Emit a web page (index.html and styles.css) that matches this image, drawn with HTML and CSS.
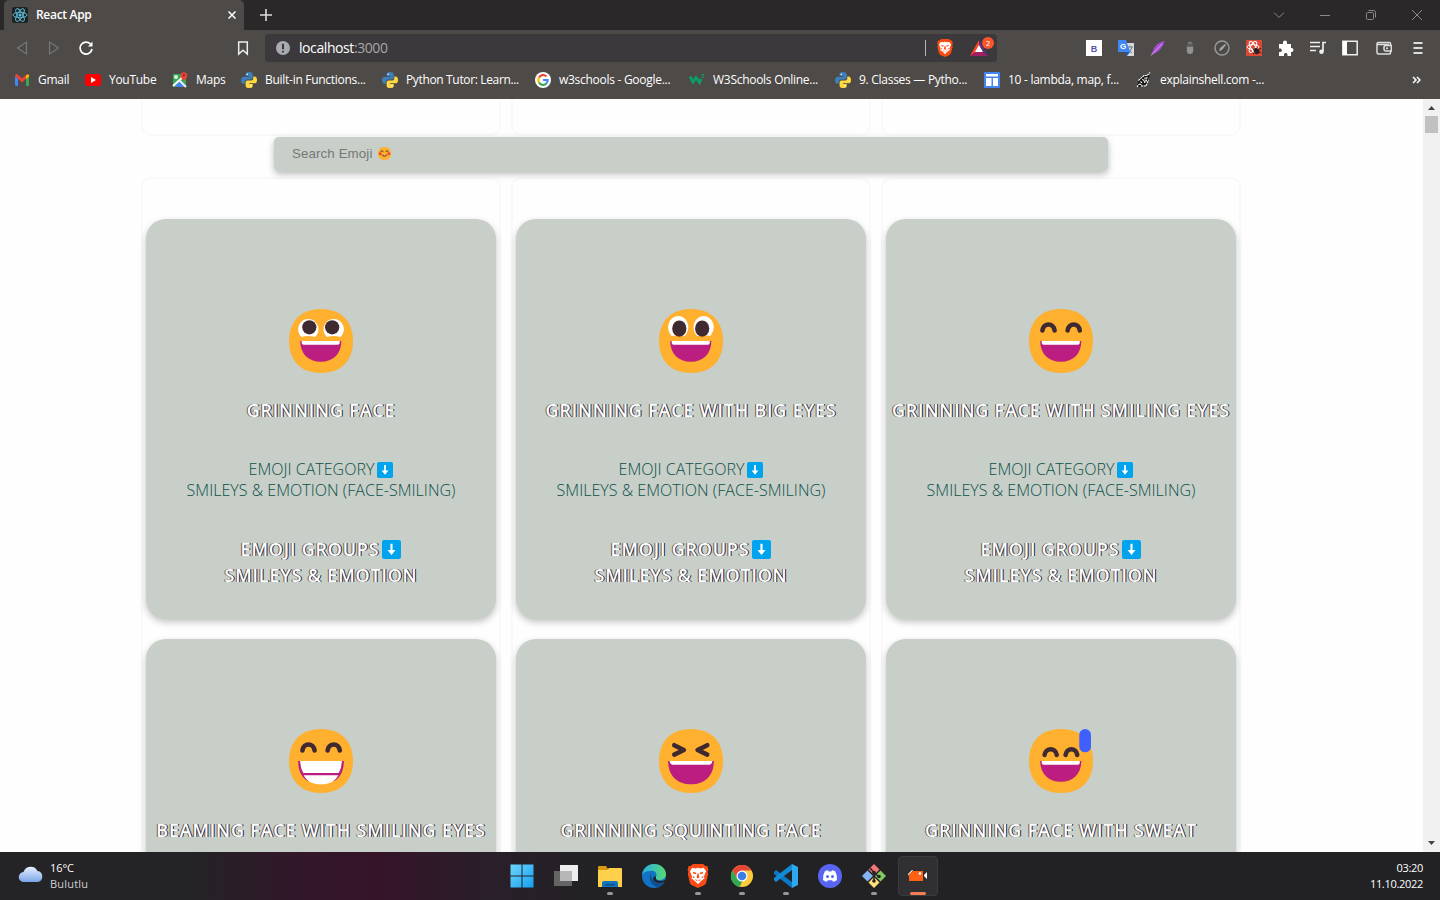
FILE: index.html
```html
<!DOCTYPE html>
<html lang="en">
<head>
<meta charset="utf-8">
<title>React App</title>
<link rel="stylesheet" href="styles.css">
</head>
<body>
<svg class="defs" aria-hidden="true">
  <symbol id="python" viewBox="0 0 16 16"><path fill="#3d7fb8" d="M8 0C5 0 4.600 1 4.600 2.300V4h3.600v.7H3C1 4.700 0 6 0 8.200s1 3.600 2.600 3.600h1.300V10c0-1.500 1.100-2.500 2.500-2.500h3.300c1.200 0 2-.9 2-2V2.300C11.700.9 10.500 0 8 0z"/><path fill="#ffd83f" d="M8.300 16c3 0 3.400-1 3.400-2.300V12H8.100v-.7h5.200c2 0 2.700-1.300 2.700-3.400 0-2.200-.9-3.500-2.500-3.500h-1.200v1.800c0 1.500-1.100 2.400-2.500 2.400H6.600c-1.200 0-2 .9-2 2v3.100c0 1.400 1.200 2.300 3.700 2.300z"/><circle cx="6.300" cy="2.200" r=".8" fill="#fff"/><circle cx="9.900" cy="13.800" r=".8" fill="#fff"/></symbol>
  <symbol id="brave" viewBox="0 0 20 23"><path fill="#fb4b14" d="M5 0h10l2 2 2-.2 1 4-.8 1.500.6 2.200-2 8.500c-.3 1-1.300 1.800-2 2.300L10 23l-5.800-2.700c-.8-.5-1.700-1.300-2-2.300l-2-8.500.6-2.200L0 5.800l1-4L3 2z"/><path fill="#fff" d="M4.500 3.700l3 .5 2.500-.6 2.500.6 3-.5L17.700 7l-2 5 .5 2-3.200 2.300L10 19.500l-3-3.200L3.800 14l.5-2-2-5z"/><path fill="#fb4b14" d="M5 7.500l3.600 1-.8 1.400L5.500 9zM15 7.500l-3.600 1 .8 1.400 2.300-.9zM9.400 9h1.200l.7 4-1.300.8-1.300-.8zM7 14.500l3 1 3-1-1.200 1.500-1.800-.4-1.800.4zM4.700 11l2.300 2-1.500.3zM15.300 11L13 13l1.500.3z"/></symbol>
  <symbol id="down" viewBox="0 0 18 18"><rect width="18" height="18" rx="2" fill="#00a4ee"/><path fill="#fff" d="M8 3.500h2v6h2.800L9 14.300 5.200 9.500H8z"/></symbol>
  <symbol id="face" viewBox="0 0 63 63"><path fill="#ffb02e" d="M31.500 0C53 0 63 14 63 31.500S53 63 31.500 63 0 49 0 31.500 10 0 31.500 0z"/></symbol>
  <symbol id="grin" viewBox="0 0 63 63"><path fill="#bb1d80" d="M11 31.500h40.500C51.500 44 43.500 52 31.300 52S11 44 11 31.500z"/><path fill="#fff" d="M12.500 31.500H50v1.800q0 1.900-2 1.900H14.500q-2 0-2-1.900z"/></symbol>
  <symbol id="e1" viewBox="0 0 63 63"><use href="#face"/><path fill="#fff" d="M12.500 27.500a10 10 0 1 1 13 0q-6.500-2-13 0zM37.500 27.500a10 10 0 1 1 13 0q-6.500-2-13 0z"/><circle cx="20" cy="18" r="7" fill="#402a32"/><circle cx="42.500" cy="18" r="7" fill="#402a32"/><use href="#grin"/></symbol>
  <symbol id="e2" viewBox="0 0 63 63"><use href="#face"/><path fill="#fff" d="M12.500 26.500C5 18 11 7 19 7s14 11 6.500 19.500q-6-1.500-13 0zM37.500 26.500C30 18 36 7 44 7s14 11 6.500 19.500q-6-1.500-13 0z"/><ellipse cx="20" cy="19.300" rx="7" ry="8" fill="#402a32"/><ellipse cx="42.500" cy="19.300" rx="7" ry="8" fill="#402a32"/><use href="#grin"/></symbol>
  <symbol id="e3" viewBox="0 0 63 63"><use href="#face"/><path class="brow" d="M13.200 21.200c1-8 11-8 12 0M38 21.200c1-8 11-8 12 0"/><use href="#grin"/></symbol>
  <symbol id="e4" viewBox="0 0 63 63"><use href="#face"/><path class="brow" d="M13.200 21.200c1-8 11-8 12 0M38 21.200c1-8 11-8 12 0"/><path fill="#bb1d80" d="M9 31.500h45c0 10-4 16.500-9 19.500H18C13 48 9 41.500 9 31.500z"/><path fill="#fff" d="M11 31.500h41q0 6-3 11.700H14q-3-5.700-3-11.700zM14.500 45.500h34C46 51 40 54.500 31.500 54.500S17 51 14.500 45.500z"/></symbol>
  <symbol id="e5" viewBox="0 0 63 63"><use href="#face"/><path class="brow" d="M15 16l9.500 4.700L15 25.200M47.500 16L38 20.700l9.500 4.500"/><path fill="#bb1d80" d="M9 31.500h45C54 46 45 54.500 31.500 54.500S9 46 9 31.500z"/><path fill="#fff" d="M10.500 31.500h42q-.3 3.700-3 3.700h-36q-2.700 0-3-3.700z"/></symbol>
  <symbol id="e6" viewBox="0 0 63 63"><use href="#face"/><path class="brow" d="M15.300 25.500c1-7.500 11-7.500 12 0M36 25.500c1-7.500 10.500-7.500 11.500 0"/><use href="#grin"/><rect x="49.500" width="11.500" height="23" rx="5.700" fill="#3f5fff"/></symbol>
</svg>

<header class="browser">
  <div class="tabs">
    <div class="tab">
      <svg class="i16" viewBox="0 0 16 16"><rect width="16" height="16" rx="2" fill="#202326"/><g fill="none" stroke="#5cc4e0" stroke-width=".9"><ellipse cx="8" cy="8" rx="7" ry="2.700"/><ellipse cx="8" cy="8" rx="7" ry="2.700" transform="rotate(60 8 8)"/><ellipse cx="8" cy="8" rx="7" ry="2.700" transform="rotate(120 8 8)"/></g><circle cx="8" cy="8" r="1.500" fill="#5cc4e0"/></svg>
      <span class="tab-title">React App</span>
      <svg class="tab-close" viewBox="0 0 8 8"><path d="M.5.5l7 7M7.500.5l-7 7" stroke="#fff" stroke-width="1.500"/></svg>
    </div>
    <svg class="new-tab" viewBox="0 0 12 12"><path d="M6 0v12M0 6h12" stroke="#ddd" stroke-width="1.600"/></svg>
    <div class="window-buttons">
      <svg viewBox="0 0 12 12"><path d="M1 3.500l5 5 5-5"/></svg>
      <svg viewBox="0 0 12 12"><path d="M1 6.500h10"/></svg>
      <svg viewBox="0 0 12 12"><path d="M1.500 4.500q0-1 1-1h5q1 0 1 1v5q0 1-1 1h-5q-1 0-1-1zM3.500 1.500h5q2 0 2 2v5"/></svg>
      <svg viewBox="0 0 12 12"><path d="M1 1l10 10M11 1L1 11"/></svg>
    </div>
  </div>

  <div class="toolbar">
    <div class="nav">
      <svg viewBox="0 0 16 16"><path d="M12.500 2v12L3.500 8z" fill="none" stroke="#77777a" stroke-width="1.200"/></svg>
      <svg viewBox="0 0 16 16"><path d="M3.500 2v12l9-6z" fill="none" stroke="#77777a" stroke-width="1.200"/></svg>
      <svg viewBox="0 0 16 16"><path d="M12.500 4A6 6 0 1 0 14 9" fill="none" stroke="#fff" stroke-width="1.700"/><path d="M14.500 1.500v5H10z" fill="#fff"/></svg>
    </div>
    <svg class="i16" viewBox="0 0 16 16"><path d="M3.700 2h8.600v12L8 10.200 3.700 14z" fill="none" stroke="#eee" stroke-width="1.500"/></svg>
    <div class="address">
      <svg class="info" viewBox="0 0 14 14"><circle cx="7" cy="7" r="7" fill="#a8acb0"/><path d="M7 2.700v5.600M7 9.800v1.700" stroke="#3c393c" stroke-width="2"/></svg>
      <span class="url">localhost<span class="port">:3000</span></span>
      <span class="divider"></span>
      <svg class="shield"><use href="#brave"/></svg>
      <span class="rewards">
        <svg viewBox="0 0 18 16"><path fill="#ff4724" d="M9 0L0 16l9-5z"/><path fill="#9e1f63" d="M0 16h18l-5-4H5z"/><path fill="#662d91" d="M9 0v5l5 7 4 4z"/><path fill="#fff" d="M9 5l4 7H5z"/></svg>
        <span class="badge">2</span>
      </span>
    </div>
    <div class="extensions">
      <svg viewBox="0 0 16 16"><rect width="16" height="16" fill="#fff"/><text x="8" y="11.500" class="ext-b">B</text></svg>
      <svg viewBox="0 0 16 16"><path fill="#d7dadd" d="M6 3h10v13H9z"/><path d="M9 7h6M12 5.500V7m2 0q-1 4-4 6m0-5q1 3 4 5" stroke="#667f83" fill="none"/><path fill="#4285f4" d="M0 0h8l4 12H0z"/><path fill="#1c57bd" d="M7 12h5l-3 4z"/><text x="2" y="9" class="ext-g">G</text></svg>
      <svg viewBox="0 0 16 16"><path fill="#a44fd0" d="M14.500 1C9 2 4 6 3 11l-2 4 1.500-.8C8 13 13 8 14.500 1z"/><path d="M1 15.500L12 4" stroke="#e3b3f4" stroke-width=".8"/></svg>
      <svg viewBox="0 0 16 16"><path fill="#737373" d="M5.500 4.500q0-3 2.500-3t2.500 3z"/><path fill="#929292" d="M4.800 7h6.400v3.500q0 3.500-3.200 3.500t-3.200-3.500z"/><path fill="#666" d="M4.500 5.500h7V7h-7z"/></svg>
      <svg viewBox="0 0 16 16"><circle cx="8" cy="8" r="7" fill="none" stroke="#9b9c9d" stroke-width="1.400"/><path d="M5 11l1-3 5-4 1 1-4 5z" fill="#a3a5a6"/></svg>
      <svg viewBox="0 0 16 16"><rect width="16" height="16" fill="#dc4936"/><g fill="none" stroke="#fff"><ellipse cx="7" cy="7" rx="6" ry="2.400"/><ellipse cx="7" cy="7" rx="6" ry="2.400" transform="rotate(60 7 7)"/><ellipse cx="7" cy="7" rx="6" ry="2.400" transform="rotate(120 7 7)"/></g><ellipse cx="10.500" cy="11" rx="2.600" ry="3.300" fill="#30201f" transform="rotate(-35 10.500 11)"/><path d="M7 9l8 4m0-5l-8 6" stroke="#30201f"/></svg>
      <svg viewBox="0 0 16 16"><path fill="#fff" d="M1 4h4V2.500a2 2 0 0 1 4 0V4h4v4h.5a2 2 0 0 1 0 4H13v4H9.500v-1.500a1.800 1.800 0 0 0-3.500 0V16H1v-4h1.500a1.800 1.800 0 0 0 0-3.500H1z"/></svg>
      <svg viewBox="0 0 16 16"><path d="M0 2.500h10M0 6.500h10M0 10.500h6M13 11.500v-9h3" fill="none" stroke="#eee" stroke-width="1.700"/><circle cx="11.500" cy="11.800" r="2.300" fill="#eee"/></svg>
      <svg viewBox="0 0 16 16"><path d="M.8 1.300h14.400v13.400H.8z" fill="none" stroke="#eee" stroke-width="1.500"/><path d="M1 1h4v14H1z" fill="#fff"/></svg>
      <svg class="wallet" viewBox="0 0 16 16"><path d="M14.500 5V3.500q0-1-1-1H2.500q-1.500 0-1.500 1v9q0 1.500 1.500 1.500h11q1 0 1-1v-1.500M1 4.500h12M15.300 5.500H10q-2 0-2 2v1.500q0 2 2 2h5.300z" fill="none" stroke="#ddd" stroke-width="1.500"/><circle cx="11" cy="8.300" r="1.100" fill="#ddd"/></svg>
      <svg viewBox="0 0 16 16"><path d="M3.500 3h9M3.500 8h9M3.500 13h9" stroke="#ddd" stroke-width="1.900"/></svg>
    </div>
  </div>

  <nav class="bookmarks">
    <a class="bm"><svg viewBox="0 0 16 16"><path fill="#4285f4" d="M1 4l3 2.600V14H2q-1 0-1-1z"/><path fill="#34a853" d="M12 6.600L15 4v9q0 1-1 1h-2z"/><path fill="#ea4335" d="M1 4q0-2 2-2l5 4.200L13 2q2 0 2 2L8 10.400z"/><path fill="#fbbc04" d="M12 3.300L15 2.500V4.500l-3 2.800z"/></svg><span>Gmail</span></a>
    <a class="bm"><svg viewBox="0 0 16 16"><rect y="2" width="16" height="12" rx="3" fill="#f00"/><path d="M6 5l5 3-5 3z" fill="#fff"/></svg><span>YouTube</span></a>
    <a class="bm"><svg viewBox="0 0 16 16"><path fill="#34a853" d="M1 2h13v13H1z"/><path fill="#4285f4" d="M8 8l6 5v2H3z"/><path d="M1 14L13 3" stroke="#fff" stroke-width="2"/><path d="M7 8l7 7" stroke="#eee" stroke-width="2"/><circle cx="4" cy="5" r="2" fill="#dcefe0"/><path fill="#ea4335" d="M8.500 3.500a3.300 3.300 0 0 1 6.700 0C15.200 6 12 9 12 9S8.500 6 8.500 3.500z"/><circle cx="11.900" cy="3.300" r="1" fill="#852118"/></svg><span>Maps</span></a>
    <a class="bm"><svg><use href="#python"/></svg><span>Built-in Functions...</span></a>
    <a class="bm tight"><svg><use href="#python"/></svg><span>Python Tutor: Learn...</span></a>
    <a class="bm"><svg viewBox="0 0 16 16"><circle cx="8" cy="8" r="8" fill="#fff"/><g fill="none" stroke-width="2.100"><path d="M4 5.500A4.700 4.700 0 0 1 11.500 4.500" stroke="#ea4335"/><path d="M4 5.500a4.700 4.700 0 0 0 0 5" stroke="#fbbc05"/><path d="M4 10.500a4.700 4.700 0 0 0 7.500 1" stroke="#34a853"/><path d="M8 8h4.700q0 2.200-1.500 3.500" stroke="#4285f4"/></g></svg><span>w3schools - Google...</span></a>
    <a class="bm"><svg viewBox="0 0 16 16"><path d="M1 4.500l3 5.500L7 5.500l3.500 5L12 7" fill="none" stroke="#0b9c68" stroke-width="2.900"/><path d="M12.500 2.500h2.500L13.500 4q2 0 1 1.500l-2 .2" fill="none" stroke="#0b9c68" stroke-width=".9"/></svg><span>W3Schools Online...</span></a>
    <a class="bm"><svg><use href="#python"/></svg><span>9. Classes — Pytho...</span></a>
    <a class="bm"><svg viewBox="0 0 16 16"><rect width="16" height="16" rx="1" fill="#4285f4"/><path fill="#fff" d="M2 2h12v2.500H2zM2 6h5.500v8H2zM9 6h5v8H9z"/></svg><span>10 - lambda, map, f...</span></a>
    <a class="bm"><svg viewBox="0 0 16 16"><path fill="#111" d="M1 14l2-6 5-4 3 .5L12.500 2l1 2-1.500 3-1 5-5 1.500L4 15z"/><path d="M1 15l2-3M2.500 8.500L8 3.500h3l3-3M5 14h5l2.500-6M4.500 9.500l2 2M6.500 7l3 4.500M9 5.500v4M11 5l-1 5M3 12l3 1" fill="none" stroke="#fff" stroke-width="1.100" stroke-dasharray="2 .7"/></svg><span>explainshell.com -...</span></a>
    <svg class="more" viewBox="0 0 9 8"><path d="M1 1l3 3-3 3M5 1l3 3-3 3" fill="none" stroke="#fff" stroke-width="1.500"/></svg>
  </nav>
</header>

<main class="viewport">
  <div class="page">
    <div class="rails top"><i></i><i></i><i></i></div>
    <div class="rails"><i></i><i></i><i></i></div>
    <label class="search"><span>Search Emoji</span><svg viewBox="0 0 63 63"><use href="#face"/><circle cx="10" cy="33" r="7" fill="#f9423a"/><circle cx="53" cy="33" r="7" fill="#f9423a"/><path d="M12 23q7-10 14 0M37 23q7-10 14 0M18 37q13 15 27 0" fill="none" stroke="#402a32" stroke-width="4.500"/></svg></label>
    <section class="cards">
      <article class="card"><svg class="emoji"><use href="#e1"/></svg><h2>GRINNING FACE</h2><p>EMOJI CATEGORY<svg><use href="#down"/></svg><br>SMILEYS &amp; EMOTION (FACE-SMILING)</p><h3>EMOJI GROUPS<svg><use href="#down"/></svg><br>SMILEYS &amp; EMOTION</h3></article>
      <article class="card"><svg class="emoji"><use href="#e2"/></svg><h2>GRINNING FACE WITH BIG EYES</h2><p>EMOJI CATEGORY<svg><use href="#down"/></svg><br>SMILEYS &amp; EMOTION (FACE-SMILING)</p><h3>EMOJI GROUPS<svg><use href="#down"/></svg><br>SMILEYS &amp; EMOTION</h3></article>
      <article class="card"><svg class="emoji"><use href="#e3"/></svg><h2>GRINNING FACE WITH SMILING EYES</h2><p>EMOJI CATEGORY<svg><use href="#down"/></svg><br>SMILEYS &amp; EMOTION (FACE-SMILING)</p><h3>EMOJI GROUPS<svg><use href="#down"/></svg><br>SMILEYS &amp; EMOTION</h3></article>
      <article class="card"><svg class="emoji"><use href="#e4"/></svg><h2>BEAMING FACE WITH SMILING EYES</h2></article>
      <article class="card"><svg class="emoji"><use href="#e5"/></svg><h2>GRINNING SQUINTING FACE</h2></article>
      <article class="card"><svg class="emoji"><use href="#e6"/></svg><h2>GRINNING FACE WITH SWEAT</h2></article>
    </section>
  </div>
  <div class="scrollbar">
    <svg viewBox="0 0 7 4"><path d="M0 4l3.500-4L7 4z" fill="#444"/></svg>
    <div class="thumb"></div>
    <svg class="end" viewBox="0 0 7 4"><path d="M0 0l3.500 4L7 0z" fill="#444"/></svg>
  </div>
</main>

<footer class="taskbar">
  <div class="weather">
    <svg viewBox="0 0 26 18"><defs><linearGradient id="cl" x2="0" y2="1"><stop stop-color="#e8f1ff"/><stop offset="1" stop-color="#7ba5e8"/></linearGradient></defs><path fill="url(#cl)" d="M6 17a5 5 0 0 1-.5-10A7.500 7.500 0 0 1 19.500 6 5.600 5.600 0 0 1 20 17z"/></svg>
    <div><div>16°C</div><div class="sky">Bulutlu</div></div>
  </div>
  <div class="apps">
    <span class="app"><svg viewBox="0 0 24 24"><defs><linearGradient id="win" x2="1" y2="1"><stop stop-color="#6fd6ff"/><stop offset="1" stop-color="#139ff0"/></linearGradient></defs><path fill="url(#win)" d="M.5.500h11v11H.5zM12.500.500h11v11h-11zM.5 12.500h11v11H.5zM12.500 12.500h11v11h-11z"/></svg></span>
    <span class="app"><svg viewBox="0 0 24 24"><path fill="#656565" d="M0 7h18v15H0z"/><path fill="#eee" d="M6 1h18v16H6z"/><path fill="#b7b7b7" d="M6 7h12v10H6z"/></svg></span>
    <span class="app run"><svg viewBox="0 0 24 24"><path fill="#d99a13" d="M0 3q0-1 1-1h7l2 3v4H0z"/><path fill="#ffd04c" d="M0 6h9l2-2h12q1 0 1 1v18H0z"/><path fill="#1274bd" d="M4 23v-4q0-2 2-2h12q2 0 2 2v4z"/><path fill="#0c4f87" d="M7 20h10v1.500H7z"/></svg></span>
    <span class="app"><svg viewBox="0 0 24 24"><defs><linearGradient id="ed"><stop stop-color="#27aee8"/><stop offset="1" stop-color="#57da70"/></linearGradient></defs><circle cx="12" cy="12" r="12" fill="#1272c4"/><path fill="url(#ed)" d="M0 11C1 4 6 0 12 0c7 0 12 5 12 10 0 4-3 6-7 6-3 0-4-1.500-3-3 2-4-2-7-6-6-4 0-7 2-8 4z"/><path fill="#0d508e" d="M9 9c-3 5 0 12 6 14 4-.5 6-3 7-5-5 3-14 0-13-9z"/><path fill="#242225" d="M14 13c-1 3 3 6 10 2.500V18l-2 0c-5 2-10 .5-11-3 0-2 2-4 3-2z"/></svg></span>
    <span class="app run"><svg><use href="#brave"/></svg></span>
    <span class="app run"><svg viewBox="0 0 24 24"><circle cx="12" cy="12" r="11" fill="#ffca3c"/><path fill="#e7453a" d="M2.500 6.500A11 11 0 0 1 21.500 6.500H12L7 14z"/><path fill="#33a852" d="M2.500 6.500L7.500 15l5 2-3 6A11 11 0 0 1 2.500 6.500z"/><circle cx="12" cy="12" r="5.500" fill="#fff"/><circle cx="12" cy="12" r="4.300" fill="#3b7ee9"/></svg></span>
    <span class="app run"><svg viewBox="0 0 24 24"><path fill="#0a78c4" d="M0 8l2-2 16 12v6L0 10z"/><path fill="#118bd6" d="M0 16l2 2L18 6V0L0 14z"/><path fill="#2ea8f0" d="M18 0l6 3v18l-6 3z"/></svg></span>
    <span class="app"><svg viewBox="0 0 24 24"><circle cx="12" cy="12" r="12" fill="#5865f2"/><path fill="#fff" d="M7 7l3-.8.7 1.200h2.600L14 6.200l3 .8q2.500 4 2 9-2 1.600-4 1.800l-.8-1.500H9.800L9 17.800Q7 17.600 5 16q-.5-5 2-9z"/><circle cx="9.500" cy="12.500" r="1.500" fill="#5865f2"/><circle cx="14.500" cy="12.500" r="1.500" fill="#5865f2"/></svg></span>
    <span class="app run"><svg viewBox="0 0 24 24"><path fill="#f07878" d="M12 0l5.500 5.500L12 11 6.500 5.500z"/><path fill="#83ca62" d="M18.500 6.500L24 12l-5.500 5.500L13 12z"/><path fill="#85b6f3" d="M5.500 6.500L11 12l-5.500 5.500L0 12z"/><path fill="#ffe27a" d="M12 13l5.500 5.500L12 24l-5.500-5.500z"/><path d="M8 4l4 4.500V17M12 9l5 3.500" stroke="#272225" stroke-width="1.500" fill="none"/><g fill="#272225"><circle cx="12" cy="8.500" r="1.800"/><circle cx="17" cy="12.500" r="1.800"/><circle cx="12" cy="17" r="1.800"/></g></svg></span>
    <span class="app active"><svg viewBox="0 0 24 24"><path fill="#fff" d="M2 10l4-4h1L3 12zM18 11l3-3v7l-3-3z"/><path fill="#ff6114" d="M3 10l4-3h10v10H3z"/><circle cx="14" cy="9.500" r="1.300" fill="#fff"/></svg></span>
  </div>
  <div class="clock">03:20<br>11.10.2022</div>
</footer>
</body>
</html>
```

FILE: styles.css
```css
* { box-sizing: border-box; }
body { margin: 0; width: 1440px; height: 900px; overflow: hidden; display: flex; flex-direction: column; font-family: "Open Sans", "Noto Sans", sans-serif; background: #fefefe; }
svg { display: block; flex: none; }
.defs { position: absolute; width: 0; height: 0; }
.brow { fill: none; stroke: #402a32; stroke-width: 4.5; stroke-linecap: round; stroke-linejoin: round; }
.i16 { width: 16px; height: 16px; }

.browser { height: 99px; flex: none; background: #4e4a48; color: #fff; }
.tabs { height: 30px; padding-left: 4px; display: flex; align-items: center; background: #2a2829; }
.tab { width: 240px; height: 30px; padding: 0 8px; display: flex; align-items: center; background: #4e4a48; border-radius: 5px 5px 0 0; }
.tab-title { flex: 1; margin: -2px 0 0 8px; font-size: 12px; font-weight: 600; letter-spacing: -.3px; }
.tab-close { width: 8px; height: 8px; }
.new-tab { width: 12px; height: 12px; margin-left: 16px; }
.window-buttons { margin-left: auto; padding-right: 17px; display: flex; gap: 34px; }
.window-buttons svg { width: 12px; height: 12px; fill: none; stroke: #89898a; stroke-width: 1; }

.toolbar { height: 36px; padding-left: 14px; display: flex; align-items: center; }
.nav { width: 221px; display: flex; gap: 16px; }
.nav svg { width: 16px; height: 16px; }
.address { width: 732px; height: 28px; margin-left: 14px; padding: 0 1px 0 11px; display: flex; align-items: center; background: #3c393c; border-radius: 4px; }
.info { width: 14px; height: 14px; }
.url { flex: 1; margin: -2px 0 0 9px; font-size: 14px; letter-spacing: -.42px; }
.port { color: #a5a5a7; }
.divider { width: 1px; height: 16px; background: #b5b3b5; }
.shield { width: 16px; height: 18px; margin: 0 17px 0 11px; }
.rewards { position: relative; width: 26px; height: 16px; }
.rewards svg { width: 18px; height: 16px; }
.badge { position: absolute; left: 12px; top: -2px; width: 12px; height: 12px; margin-top: -1px; border-radius: 6px; background: #fb542b; font-size: 8px; line-height: 12px; text-align: center; }
.extensions { margin-left: 89px; display: flex; gap: 16px; }
.extensions svg { width: 16px; height: 16px; }
.extensions .wallet { margin: 0 2px; }
.ext-b { fill: #5753ab; font: bold 9px "Liberation Sans", sans-serif; text-anchor: middle; }
.ext-g { fill: #fff; font: bold 8px "Liberation Sans", sans-serif; }

.bookmarks { height: 28px; padding-left: 14px; display: grid; grid-template-columns: 71px 87px 69px 141px 153px 154px 146px 149px 152px 276px auto; align-items: center; }
.bm { display: flex; align-items: center; gap: 8px; font-size: 12px; white-space: nowrap; letter-spacing: -.28px; }
.bm span { margin-top: -2px; }
.tight { letter-spacing: -.35px; }
.bm svg { width: 16px; height: 16px; }
.more { width: 9px; height: 8px; }

.viewport { height: 753px; flex: none; display: flex; overflow: hidden; }
.page { position: relative; flex: 1; overflow: hidden; padding: 38px 187px 0 146px; }
.rails { position: absolute; left: 141px; top: 78px; display: flex; gap: 10px; }
.rails i { width: 360px; height: 780px; border: 2px solid #f9f9f9; border-radius: 10px; }
.rails.top { top: -20px; }
.rails.top i { height: 57px; }
.search { position: relative; width: 834px; height: 34px; margin-left: 128px; padding: 0 0 2px 18px; display: flex; align-items: center; gap: 6px; background: #c8cec8; border-radius: 5px; box-shadow: 0 3px 7px rgba(0,0,0,.28); color: #777; font: 13.333px "Liberation Sans", sans-serif; letter-spacing: .1px; }
.search svg { width: 13px; height: 13px; }
.cards { position: relative; margin-top: 48px; display: grid; grid-template-columns: repeat(3, 350px); grid-auto-rows: 400px; gap: 20px; }
.card { padding-top: 90px; display: flex; flex-direction: column; align-items: center; text-align: center; background: #c8cec8; border-radius: 20px; box-shadow: 0 3px 7px rgba(0,0,0,.24); white-space: nowrap; }
.emoji { width: 64px; height: 64px; }
h2, h3 { margin: 0; font-size: 18px; font-weight: 600; line-height: 26px; letter-spacing: .78px; color: #fff; text-shadow: 1px 0 #101c48, -1px 0 rgba(105,65,20,.85); }
h2 { margin-top: 24px; }
.card p { margin: 36px 0 0; font-size: 16px; font-weight: 300; line-height: 21px; letter-spacing: .03px; color: #0b5148; }
.card p svg, h3 svg { display: inline-block; vertical-align: -3px; }
.card p svg { width: 16px; height: 16px; margin-left: 3px; }
h3 { margin-top: 35px; }
h3 svg { width: 19px; height: 19px; margin-left: 3px; }

.scrollbar { width: 17px; padding: 7px 2px; display: flex; flex-direction: column; align-items: center; background: #f1f1f1; }
.scrollbar svg { width: 7px; height: 4px; }
.thumb { width: 13px; height: 17px; margin-top: 6px; background: #c1c1c1; }
.scrollbar .end { margin-top: auto; }

.taskbar { height: 48px; flex: none; display: flex; align-items: center; color: #fff; font-size: 11px; line-height: 16px; background: linear-gradient(90deg, #242326 0, #242326 190px, #32172a 300px, #351429 380px, #291f2a 490px, #222224 600px, #222224); }
.weather { width: 500px; padding-left: 18px; display: flex; align-items: center; gap: 6px; letter-spacing: -.1px; }
.weather svg { width: 26px; height: 18px; margin-top: -4px; }
.sky { color: #d0d0d0; letter-spacing: .2px; }
.apps { display: flex; }
.app { position: relative; width: 44px; height: 40px; display: flex; align-items: center; justify-content: center; }
.app svg { width: 24px; height: 24px; }
.run::after, .active::after { content: ""; position: absolute; bottom: 1px; width: 6px; height: 3px; border-radius: 2px; background: #98989a; }
.active { width: 40px; margin-left: 2px; background: #303032; border: 1px solid #3b3b3d; border-radius: 4px; }
.active::after { width: 16px; bottom: 0; background: #f57c55; }
.clock { margin-left: auto; padding-right: 17px; text-align: right; letter-spacing: -.3px; }
```
